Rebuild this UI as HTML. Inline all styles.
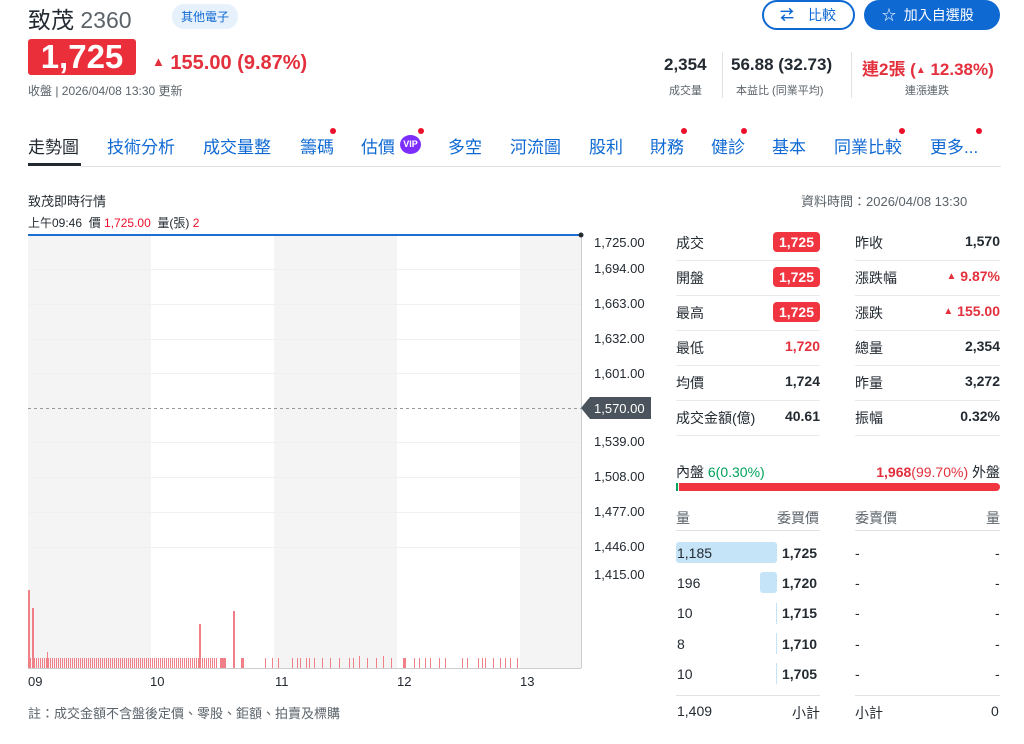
<!DOCTYPE html>
<html><head><meta charset="utf-8"><style>
*{margin:0;padding:0;box-sizing:border-box}
body{width:1024px;height:744px;background:#fff;font-family:"Liberation Sans","Noto Sans CJK TC",sans-serif;color:#232a31;position:relative;overflow:hidden}
.a{position:absolute;white-space:nowrap}
.red{color:#eb0f29}
.tab{position:absolute;top:133px;font-size:17px;color:#0f69d3}
.dot{position:absolute;width:6px;height:6px;border-radius:50%;background:#eb0f29}
.row{position:absolute;height:35px;border-bottom:1px solid #e8eaed;font-size:14px}
.row span{position:absolute;top:7px}
.badge{position:absolute;right:0;top:6px;background:#f03440;color:#fff;border-radius:4px;padding:2px 6px;font-weight:bold;font-size:14px}
.ob{position:absolute;font-size:14px}
</style></head><body>
<div class="a" style="left:28px;top:1px;font-size:23px;color:#232a31">致茂 <span style="color:#5b636a">2360</span></div>
<div class="a" style="left:172px;top:4px;background:#e6f1fc;color:#0f69d3;font-size:12px;padding:4px 9px;border-radius:12px">其他電子</div>
<div class="a" style="left:28px;top:39px;width:108px;height:36px;background:#eb2f3a;border-radius:3px;color:#fff;font-size:33px;font-weight:bold;text-align:center;line-height:36px">1,725</div>
<div class="a red" style="left:152px;top:52px;font-size:20px;font-weight:bold;color:#e3303c"><span style="font-size:13px;vertical-align:3px">▲</span> 155.00 (9.87%)</div>
<div class="a" style="left:28px;top:82px;font-size:12px;color:#5b636a">收盤 | 2026/04/08 13:30 更新</div>

<div class="a" style="left:762px;top:0px;width:93px;height:30px;border:2px solid #0f69d3;border-radius:15px;color:#0f69d3;font-size:14px;line-height:26px;padding-left:44px">比較</div>
<div class="a" style="left:780px;top:5px;color:#0f69d3;font-size:14px;font-weight:bold">⇄</div>
<div class="a" style="left:864px;top:0px;width:136px;height:30px;background:#0f69d3;border-radius:15px;color:#fff;font-size:14px;line-height:30px;padding-left:18px">☆&nbsp; 加入自選股</div>

<div class="a" style="left:664px;top:55px;font-size:17px;font-weight:bold">2,354</div>
<div class="a" style="left:669px;top:82px;font-size:11px;color:#5b636a">成交量</div>
<div class="a" style="left:722px;top:52px;width:1px;height:46px;background:#e0e3e6"></div>
<div class="a" style="left:731px;top:55px;font-size:17px;font-weight:bold">56.88 (32.73)</div>
<div class="a" style="left:736px;top:82px;font-size:11px;color:#5b636a">本益比 (同業平均)</div>
<div class="a" style="left:851px;top:52px;width:1px;height:46px;background:#e0e3e6"></div>
<div class="a" style="left:862px;top:55px;font-size:17px;font-weight:bold;color:#e3303c">連2張 (<span style="font-size:10px;vertical-align:2px">▲</span> 12.38%)</div>
<div class="a" style="left:905px;top:82px;font-size:11px;color:#5b636a">連漲連跌</div>

<div class="tab" style="left:28px;color:#232a31">走勢圖</div>
<div class="a" style="left:28px;top:163px;width:53px;height:3px;background:#232a31"></div>
<div class="a" style="left:81px;top:166px;width:920px;height:1px;background:#e0e3e6"></div>
<div class="tab" style="left:107px">技術分析</div>
<div class="tab" style="left:203px">成交量整</div>
<div class="tab" style="left:300px">籌碼</div><div class="dot" style="left:330px;top:128px"></div>
<div class="tab" style="left:361px">估價</div>
<div class="a" style="left:400px;top:135px;width:21px;height:19px;border-radius:50%;background:#7d2eff;color:#fff;font-size:9px;font-weight:bold;text-align:center;line-height:19px">VIP</div><div class="dot" style="left:418px;top:128px"></div>
<div class="tab" style="left:448px">多空</div>
<div class="tab" style="left:510px">河流圖</div>
<div class="tab" style="left:589px">股利</div>
<div class="tab" style="left:650px">財務</div><div class="dot" style="left:681px;top:128px"></div>
<div class="tab" style="left:711px">健診</div><div class="dot" style="left:741px;top:128px"></div>
<div class="tab" style="left:772px">基本</div>
<div class="tab" style="left:834px">同業比較</div><div class="dot" style="left:899px;top:128px"></div>
<div class="tab" style="left:930px">更多...</div><div class="dot" style="left:976px;top:128px"></div>

<div class="a" style="left:28px;top:191px;font-size:13px">致茂即時行情</div>
<div class="a" style="left:801px;top:191px;font-size:13px;color:#5b636a">資料時間：2026/04/08 13:30</div>
<div class="a" style="left:28px;top:214px;font-size:12px">上午09:46&nbsp; 價 <span class="red">1,725.00</span>&nbsp; 量(張) <span class="red">2</span></div>

<svg class="a" style="left:0;top:0" width="660" height="700">
<defs><pattern id="p" width="2" height="10" patternUnits="userSpaceOnUse"><rect width="1" height="10" fill="#f07f88"/></pattern></defs>
<rect x="28" y="235" width="123" height="433" fill="#f4f4f4"/>
<rect x="274" y="235" width="123" height="433" fill="#f4f4f4"/>
<rect x="520" y="235" width="61" height="433" fill="#f4f4f4"/>
<g stroke="#f0f0f0" stroke-width="1">
<line x1="28" y1="269.5" x2="581" y2="269.5"/><line x1="28" y1="304.5" x2="581" y2="304.5"/><line x1="28" y1="339.5" x2="581" y2="339.5"/><line x1="28" y1="373.5" x2="581" y2="373.5"/><line x1="28" y1="442.5" x2="581" y2="442.5"/><line x1="28" y1="477.5" x2="581" y2="477.5"/><line x1="28" y1="512.5" x2="581" y2="512.5"/><line x1="28" y1="547.5" x2="581" y2="547.5"/>
</g>
<line x1="581.5" y1="235" x2="581.5" y2="668" stroke="#ccc"/>
<line x1="28" y1="668.5" x2="581" y2="668.5" stroke="#ccc"/>
<line x1="28" y1="408.5" x2="581" y2="408.5" stroke="#999" stroke-dasharray="3,3"/>
<line x1="28" y1="235" x2="581" y2="235" stroke="#1a6fd1" stroke-width="2"/>
<circle cx="581" cy="235" r="2.5" fill="#232a31"/>
<path d="M581 408 L590 397 H651 V419 H590 Z" fill="#4b545c"/>
<text x="594" y="413" font-size="13" fill="#fff" font-family="Liberation Sans">1,570.00</text>
<g font-size="13" fill="#232a31" font-family="Liberation Sans">
<text x="594" y="247">1,725.00</text><text x="594" y="273">1,694.00</text><text x="594" y="308">1,663.00</text><text x="594" y="343">1,632.00</text><text x="594" y="378">1,601.00</text><text x="594" y="446">1,539.00</text><text x="594" y="481">1,508.00</text><text x="594" y="516">1,477.00</text><text x="594" y="551">1,446.00</text><text x="594" y="579">1,415.00</text>
<text x="28" y="686">09</text><text x="150" y="686">10</text><text x="275" y="686">11</text><text x="397" y="686">12</text><text x="520" y="686">13</text>
</g>
<rect x="28" y="658" width="190" height="10" fill="url(#p)"/>
<g fill="#f07f88">
<rect x="28" y="590" width="2" height="78"/><rect x="32" y="608" width="2" height="60"/><rect x="47" y="652" width="1" height="16"/><rect x="199" y="624" width="2" height="44"/><rect x="233" y="611" width="2" height="57"/>
<rect x="220" y="658" width="6" height="10"/><rect x="241" y="658" width="3" height="10"/>
<rect x="265" y="658" width="1" height="10"/><rect x="272" y="658" width="1" height="10"/><rect x="278" y="658" width="1" height="10"/><rect x="292" y="658" width="1" height="10"/><rect x="297" y="658" width="1" height="10"/><rect x="300" y="658" width="1" height="10"/><rect x="306" y="658" width="1" height="10"/><rect x="309" y="658" width="1" height="10"/><rect x="314" y="658" width="1" height="10"/><rect x="322" y="658" width="1" height="10"/><rect x="330" y="658" width="1" height="10"/><rect x="339" y="658" width="1" height="10"/><rect x="349" y="658" width="1" height="10"/><rect x="353" y="658" width="1" height="10"/><rect x="359" y="656" width="1" height="12"/><rect x="367" y="658" width="1" height="10"/><rect x="376" y="658" width="1" height="10"/><rect x="383" y="656" width="1" height="12"/><rect x="391" y="658" width="1" height="10"/><rect x="403" y="658" width="3" height="10"/><rect x="414" y="658" width="1" height="10"/><rect x="419" y="658" width="1" height="10"/><rect x="425" y="658" width="1" height="10"/><rect x="430" y="658" width="1" height="10"/><rect x="439" y="658" width="1" height="10"/><rect x="445" y="658" width="1" height="10"/><rect x="462" y="658" width="1" height="10"/><rect x="467" y="658" width="1" height="10"/><rect x="478" y="658" width="1" height="10"/><rect x="482" y="658" width="1" height="10"/><rect x="485" y="658" width="1" height="10"/><rect x="493" y="658" width="1" height="10"/><rect x="500" y="658" width="1" height="10"/><rect x="505" y="658" width="1" height="10"/><rect x="510" y="658" width="1" height="10"/><rect x="517" y="658" width="1" height="10"/>
</g>
</svg>
<div class="a" style="left:28px;top:703px;font-size:13px;color:#5b636a">註：成交金額不含盤後定價、零股、鉅額、拍賣及標購</div>

<div class="row" style="left:676px;top:226px;width:144px"><span>成交</span><div class="badge">1,725</div></div>
<div class="row" style="left:676px;top:261px;width:144px"><span>開盤</span><div class="badge">1,725</div></div>
<div class="row" style="left:676px;top:296px;width:144px"><span>最高</span><div class="badge">1,725</div></div>
<div class="row" style="left:676px;top:331px;width:144px"><span>最低</span><span class="red" style="right:0;font-weight:bold;color:#e3303c">1,720</span></div>
<div class="row" style="left:676px;top:366px;width:144px"><span>均價</span><span style="right:0;font-weight:bold">1,724</span></div>
<div class="row" style="left:676px;top:401px;width:144px"><span>成交金額(億)</span><span style="right:0;font-weight:bold">40.61</span></div>
<div class="row" style="left:855px;top:226px;width:145px"><span>昨收</span><span style="right:0;font-weight:bold">1,570</span></div>
<div class="row" style="left:855px;top:261px;width:145px"><span>漲跌幅</span><span style="right:0;font-weight:bold;color:#e3303c"><span style="position:static;font-size:10px;vertical-align:2px">▲</span> 9.87%</span></div>
<div class="row" style="left:855px;top:296px;width:145px"><span>漲跌</span><span style="right:0;font-weight:bold;color:#e3303c"><span style="position:static;font-size:10px;vertical-align:2px">▲</span> 155.00</span></div>
<div class="row" style="left:855px;top:331px;width:145px"><span>總量</span><span style="right:0;font-weight:bold">2,354</span></div>
<div class="row" style="left:855px;top:366px;width:145px"><span>昨量</span><span style="right:0;font-weight:bold">3,272</span></div>
<div class="row" style="left:855px;top:401px;width:145px"><span>振幅</span><span style="right:0;font-weight:bold">0.32%</span></div>

<div class="ob" style="left:676px;top:462px">內盤 <span style="color:#00a35a">6(0.30%)</span></div>
<div class="ob" style="right:24px;top:462px"><span style="color:#e3303c"><b>1,968</b>(99.70%)</span> 外盤</div>
<div class="a" style="left:676px;top:483px;width:2px;height:8px;background:#00a35a"></div>
<div class="a" style="left:679px;top:483px;width:321px;height:8px;background:#f03440;border-radius:0 4px 4px 0"></div>
<div class="ob" style="left:676px;top:508px;color:#5b636a">量</div>
<div class="ob" style="left:777px;top:508px;color:#5b636a">委買價</div>
<div class="ob" style="left:855px;top:508px;color:#5b636a">委賣價</div>
<div class="ob" style="left:986px;top:508px;color:#5b636a">量</div>
<div class="a" style="left:676px;top:530px;width:144px;height:1px;background:#e0e3e6"></div>
<div class="a" style="left:855px;top:530px;width:145px;height:1px;background:#e0e3e6"></div>
<div class="a" style="left:676px;top:542px;width:101px;height:21px;background:#c5e4f8;border-radius:3px"></div>
<div class="a" style="left:760px;top:572px;width:17px;height:21px;background:#c5e4f8;border-radius:3px"></div>
<div class="a" style="left:776px;top:603px;width:1px;height:21px;background:#c5e4f8"></div>
<div class="a" style="left:776px;top:633px;width:1px;height:21px;background:#c5e4f8"></div>
<div class="a" style="left:776px;top:663px;width:1px;height:21px;background:#c5e4f8"></div>
<div class="ob" style="left:677px;top:545px">1,185</div><div class="ob" style="left:782px;top:545px;font-weight:bold">1,725</div>
<div class="ob" style="left:677px;top:575px">196</div><div class="ob" style="left:782px;top:575px;font-weight:bold">1,720</div>
<div class="ob" style="left:677px;top:605px">10</div><div class="ob" style="left:782px;top:605px;font-weight:bold">1,715</div>
<div class="ob" style="left:677px;top:636px">8</div><div class="ob" style="left:782px;top:636px;font-weight:bold">1,710</div>
<div class="ob" style="left:677px;top:666px">10</div><div class="ob" style="left:782px;top:666px;font-weight:bold">1,705</div>
<div class="ob" style="left:855px;top:545px">-</div><div class="ob" style="left:995px;top:545px">-</div>
<div class="ob" style="left:855px;top:575px">-</div><div class="ob" style="left:995px;top:575px">-</div>
<div class="ob" style="left:855px;top:605px">-</div><div class="ob" style="left:995px;top:605px">-</div>
<div class="ob" style="left:855px;top:636px">-</div><div class="ob" style="left:995px;top:636px">-</div>
<div class="ob" style="left:855px;top:666px">-</div><div class="ob" style="left:995px;top:666px">-</div>
<div class="a" style="left:676px;top:695px;width:144px;height:1px;background:#e0e3e6"></div>
<div class="a" style="left:855px;top:695px;width:145px;height:1px;background:#e0e3e6"></div>
<div class="ob" style="left:677px;top:703px">1,409</div><div class="ob" style="left:792px;top:703px">小計</div>
<div class="ob" style="left:855px;top:703px">小計</div><div class="ob" style="left:991px;top:703px">0</div>
</body></html>
